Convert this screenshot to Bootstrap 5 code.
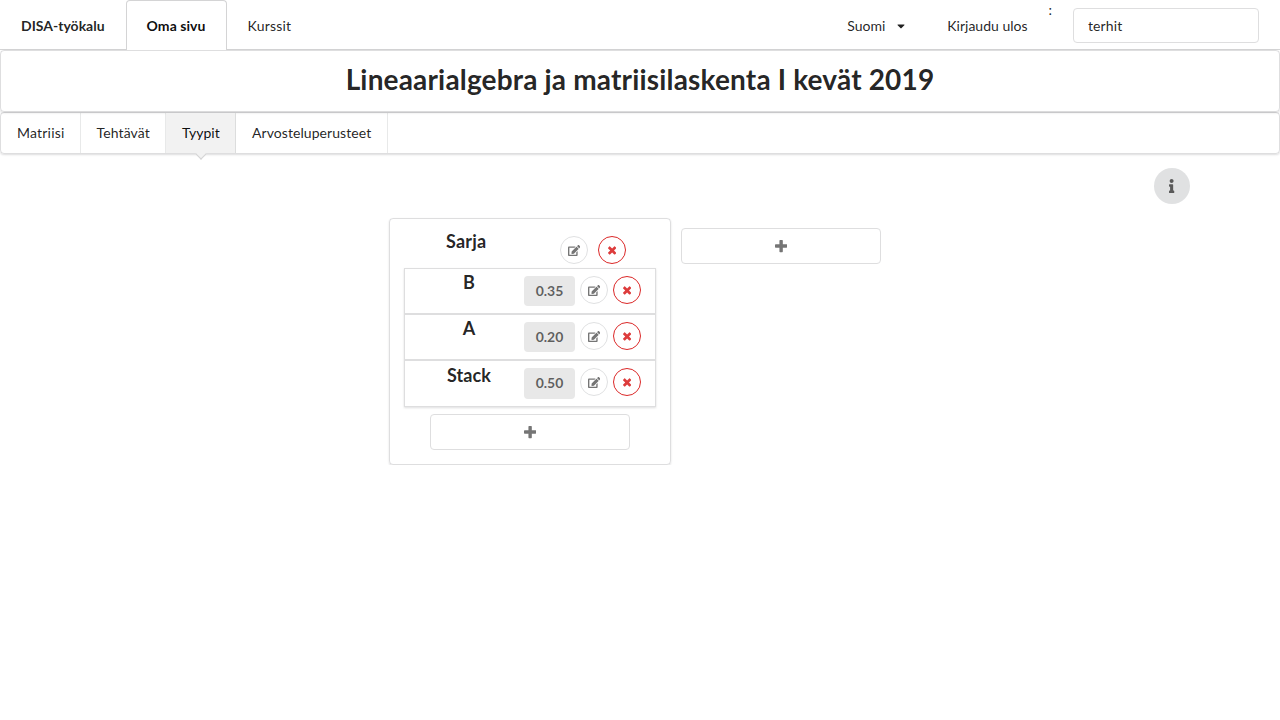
<!DOCTYPE html>
<html lang="fi">
<head>
<meta charset="utf-8">
<meta name="viewport" content="width=device-width, initial-scale=1">
<title>DISA-työkalu</title>
<link href="https://cdn.jsdelivr.net/npm/bootstrap@5.3.0/dist/css/bootstrap.min.css" rel="stylesheet">
<style>
body{font-family:Lato,"Liberation Sans",sans-serif;font-size:14px;line-height:20px;color:rgba(0,0,0,.87)}
svg{fill:currentColor;display:block}
.topbar{height:50px;border-bottom:1px solid #d4d4d5}
.topbar .nav-link{color:rgba(0,0,0,.87);padding:2px 21px 0;display:flex;align-items:center;height:50px}
.topbar .nav-link.active{width:101px;background:#fff;border:1px solid #d4d4d5;border-bottom:0;border-radius:4px 4px 0 0;padding:1px 20px 0;font-weight:700;color:rgba(0,0,0,.95);letter-spacing:.06px}
.loose{letter-spacing:.18px}
.user-field{width:186px;height:35px;margin:8px 21px 0 21px;border:1px solid #dededf;border-radius:4px;padding:0 14px 1px;font-size:14px;letter-spacing:.1px;color:rgba(0,0,0,.87);box-shadow:none}
.panel{border:1px solid rgba(34,36,38,.15);border-radius:4px;box-shadow:0 1px 2px 0 rgba(34,36,38,.15)}
.titlebox{height:62px;padding-top:12px}
.titlebox h1{font-size:28px;line-height:32px;font-weight:700;letter-spacing:.17px;margin:0;color:rgba(0,0,0,.87)}
.tabs{height:42px}
.tabs .nav-link{position:relative;color:rgba(0,0,0,.87);padding:0 0 0 16px;height:40px;line-height:40px;border-right:1px solid rgba(34,36,38,.1);white-space:nowrap}
.tabs .nav-link:nth-child(1){width:80px;letter-spacing:.2px}
.tabs .nav-link:nth-child(2){width:85px;padding-left:15.6px;letter-spacing:.1px}
.tabs .nav-link:nth-child(3){width:70px}
.tabs .nav-link:nth-child(4){width:152px;letter-spacing:.07px}
.tabs .nav-link.active{background:#f2f2f2;color:rgba(0,0,0,.95)}
.tabs .nav-link.active::after{content:"";position:absolute;left:50%;top:100%;width:8px;height:8px;background:#f2f2f2;border:solid #d4d4d5;border-width:0 1px 1px 0;transform:translate(-50%,-50%) rotate(45deg);margin:.5px 0 0 .5px}
.info{width:36px;height:36px;margin:14px 90px 14px auto;border:0;border-radius:50%;background:#e0e1e2;color:rgba(0,0,0,.6)}
.types{margin-left:389px;gap:10px}
.typecard{width:282px;height:247px;padding:0 14px}
.typehead{height:49px;padding:17px 30px 0 42px}
h2,h3{font-size:18px;line-height:23px;font-weight:700;margin:0;color:rgba(0,0,0,.87)}
.typehead h2{margin-top:-6px;letter-spacing:.2px}
.entry{height:46px;border:1px solid rgba(34,36,38,.15);padding:7px 14px 0 0}
.entry:last-child{height:47px}
.entry:last-child h3{margin-top:-4px}
.entries{box-shadow:0 1px 2px 0 rgba(34,36,38,.15)}
.entry h3{width:128px;text-align:center;margin:-5px -9px 0 0;letter-spacing:.1px}
.weight{width:51px;height:30px;line-height:30px;border-radius:4px;background:#e8e8e8;color:rgba(0,0,0,.6);font-weight:700;text-align:center;margin-right:5px}
.entry:last-child .weight{height:31px}
.round{width:28px;height:28px;border-radius:50%;border:1px solid #e0e1e2;background:#fff;color:rgba(0,0,0,.54);padding:1px 0 0}
.round.del{border-color:#db2828;color:#dd3c3c}
.add{width:200px;height:36px;border:1px solid #dededf;border-radius:4px;background:#fff;color:rgba(0,0,0,.54)}
</style>
</head>
<body>
<svg width="0" height="0" class="position-absolute" aria-hidden="true">
<symbol id="edit" viewBox="0 0 576 512"><path d="M402.6 83.2l90.2 90.2c3.8 3.8 3.8 10 0 13.8L274.4 405.6l-92.8 10.3c-12.4 1.4-22.9-9.1-21.5-21.5l10.3-92.8L388.8 83.2c3.8-3.8 10-3.8 13.8 0zm162-22.9l-48.8-48.8c-15.2-15.2-39.9-15.2-55.2 0l-35.4 35.4c-3.8 3.8-3.8 10 0 13.8l90.2 90.2c3.8 3.8 10 3.8 13.8 0l35.4-35.4c15.2-15.3 15.2-40 0-55.2zM384 346.2V448H64V128h229.8c3.2 0 6.2-1.3 8.5-3.5l40-40c7.6-7.6 2.2-20.5-8.5-20.5H48C21.5 64 0 85.5 0 112v352c0 26.5 21.5 48 48 48h352c26.5 0 48-21.5 48-48V306.2c0-10.7-12.9-16-20.5-8.5l-40 40c-2.2 2.3-3.5 5.3-3.5 8.5z"/></symbol>
<symbol id="del" viewBox="0 0 384 512"><path d="M323.1 441l53.9-53.9c9.4-9.4 9.4-24.5 0-33.9L279.8 256l97.2-97.2c9.4-9.4 9.4-24.5 0-33.9L323.1 71c-9.4-9.4-24.5-9.4-33.9 0L192 168.2 94.8 71c-9.4-9.4-24.5-9.4-33.9 0L7 124.9c-9.4 9.4-9.4 24.5 0 33.9l97.2 97.2L7 353.2c-9.4 9.4-9.4 24.5 0 33.9L60.9 441c9.4 9.4 24.5 9.4 33.9 0l97.2-97.2 97.2 97.2c9.3 9.3 24.5 9.3 33.9 0z"/></symbol>
<symbol id="plus" viewBox="0 0 448 512"><path d="M448 294.2v-76.4c0-13.3-10.7-24-24-24H286.2V56c0-13.3-10.7-24-24-24h-76.4c-13.3 0-24 10.7-24 24v137.8H24c-13.3 0-24 10.7-24 24v76.4c0 13.3 10.7 24 24 24h137.8V456c0 13.3 10.7 24 24 24h76.4c13.3 0 24-10.7 24-24V318.2H424c13.3 0 24-10.7 24-24z"/></symbol>
</svg>
<nav class="topbar d-flex align-items-start">
  <a class="nav-link fw-bold" href="#">DISA-työkalu</a>
  <a class="nav-link active text-nowrap" href="#">Oma sivu</a>
  <a class="nav-link loose" href="#">Kurssit</a>
  <a class="nav-link ms-auto" href="#">Suomi<svg width="8" height="12" viewBox="0 0 320 512" style="margin-left:12px"><path d="M31.3 192h257.3c17.8 0 26.7 21.5 14.1 34.1L174.1 354.8c-7.8 7.8-20.5 7.8-28.3 0L17.2 226.1C4.6 213.5 13.5 192 31.3 192z"/></svg></a>
  <a class="nav-link" href="#">Kirjaudu ulos</a>
  <span>:</span>
  <input class="form-control user-field" value="terhit" aria-label="Käyttäjä">
</nav>
<header class="panel titlebox text-center"><h1>Lineaarialgebra ja matriisilaskenta I kevät 2019</h1></header>
<nav class="panel tabs d-flex">
  <a class="nav-link" href="#">Matriisi</a>
  <a class="nav-link" href="#">Tehtävät</a>
  <a class="nav-link active" href="#">Tyypit</a>
  <a class="nav-link" href="#">Arvosteluperusteet</a>
</nav>
<main>
  <button class="info d-flex align-items-center justify-content-center p-0" aria-label="Info"><svg width="5.25" height="14" viewBox="0 0 192 512"><path d="M20 424.229h20V279.771H20c-11.046 0-20-8.954-20-20V212c0-11.046 8.954-20 20-20h112c11.046 0 20 8.954 20 20v212.229h20c11.046 0 20 8.954 20 20V492c0 11.046-8.954 20-20 20H20c-11.046 0-20-8.954-20-20v-47.771c0-11.046 8.954-20 20-20zM96 0C56.235 0 24 32.235 24 72s32.235 72 72 72 72-32.235 72-72S135.764 0 96 0z"/></svg></button>
  <div class="types d-flex align-items-start">
    <section class="panel typecard">
      <div class="typehead d-flex align-items-start">
        <h2 class="me-auto">Sarja</h2>
        <button class="round d-flex align-items-center justify-content-center" aria-label="Muokkaa"><svg width="12.4" height="11"><use href="#edit"/></svg></button>
        <button class="round del d-flex align-items-center justify-content-center" style="margin-left:10px" aria-label="Poista"><svg width="8.25" height="11"><use href="#del"/></svg></button>
      </div>
      <div class="entries">
        <div class="entry d-flex align-items-start"><h3>B</h3><div class="weight">0.35</div>
          <button class="round d-flex align-items-center justify-content-center" aria-label="Muokkaa"><svg width="12.4" height="11"><use href="#edit"/></svg></button>
          <button class="round del d-flex align-items-center justify-content-center" style="margin-left:5px" aria-label="Poista"><svg width="8.25" height="11"><use href="#del"/></svg></button></div>
        <div class="entry d-flex align-items-start"><h3>A</h3><div class="weight">0.20</div>
          <button class="round d-flex align-items-center justify-content-center" aria-label="Muokkaa"><svg width="12.4" height="11"><use href="#edit"/></svg></button>
          <button class="round del d-flex align-items-center justify-content-center" style="margin-left:5px" aria-label="Poista"><svg width="8.25" height="11"><use href="#del"/></svg></button></div>
        <div class="entry d-flex align-items-start"><h3>Stack</h3><div class="weight">0.50</div>
          <button class="round d-flex align-items-center justify-content-center" aria-label="Muokkaa"><svg width="12.4" height="11"><use href="#edit"/></svg></button>
          <button class="round del d-flex align-items-center justify-content-center" style="margin-left:5px" aria-label="Poista"><svg width="8.25" height="11"><use href="#del"/></svg></button></div>
      </div>
      <button class="add d-flex align-items-center justify-content-center mx-auto" style="margin-top:7px" aria-label="Lisää"><svg width="12.25" height="14"><use href="#plus"/></svg></button>
    </section>
    <button class="add d-flex align-items-center justify-content-center" style="margin-top:10px" aria-label="Lisää"><svg width="12.25" height="14"><use href="#plus"/></svg></button>
  </div>
</main>
<script src="https://cdn.jsdelivr.net/npm/bootstrap@5.3.0/dist/js/bootstrap.bundle.min.js"></script>
</body>
</html>
